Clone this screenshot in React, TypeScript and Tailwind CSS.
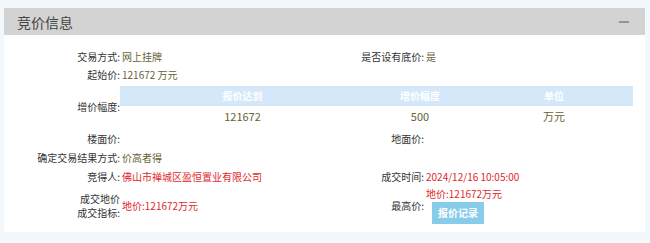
import { Minus } from "lucide-react";

const font = { fontFamily: '"Noto Sans CJK SC", "Noto Sans", sans-serif' };

function Label({ children }: { children: React.ReactNode }) {
  return <div className="text-right text-[#333] whitespace-nowrap">{children}</div>;
}

function Value({ children, red }: { children?: React.ReactNode; red?: boolean }) {
  return (
    <div className={`pl-[2px] whitespace-nowrap ${red ? "text-[#e0282e]" : "text-[#675f36]"}`}>
      {children}
    </div>
  );
}

export default function App() {
  const cols = "grid grid-cols-[116px_188px_116px_1fr] items-center";

  return (
    <div className="w-[650px] h-[243px] bg-[#f3f8fd] pt-[8px] px-[4px] text-[10px] leading-none" style={font}>
      <div className="w-[641px] bg-white">
        <div className="h-[27px] bg-[#d3d3d3] flex items-center justify-between pl-[13px] pr-[13px]">
          <h2 className="text-[14px] text-[#444]">竞价信息</h2>
          <Minus className="w-[16px] h-[16px] text-[#555]" strokeWidth={1.5} />
        </div>

        <div className="pt-[13px] pb-[6px] pr-[12px]">
          <div className={`${cols} h-[18px]`}>
            <Label>交易方式:</Label>
            <Value>网上挂牌</Value>
            <Label>是否设有底价:</Label>
            <Value>是</Value>
          </div>
          <div className={`${cols} h-[17px]`}>
            <Label>起始价:</Label>
            <Value>121672 万元</Value>
          </div>

          <div className="grid grid-cols-[116px_1fr] items-center mt-[3px]">
            <Label>增价幅度:</Label>
            <div className="ml-[0px]">
              <div className="grid grid-cols-[245px_110px_1fr] h-[20px] items-center bg-[#d4e8f9] text-white font-bold text-center">
                <div>报价达到</div>
                <div>增价幅度</div>
                <div>单位</div>
              </div>
              <div className="grid grid-cols-[245px_110px_1fr] h-[21px] items-center text-center text-[#675f36] text-[11px]">
                <div>121672</div>
                <div>500</div>
                <div>万元</div>
              </div>
            </div>
          </div>

          <div className={`${cols} h-[19px] mt-[2px]`}>
            <Label>楼面价:</Label>
            <Value />
            <Label>地面价:</Label>
            <Value />
          </div>
          <div className={`${cols} h-[19px]`}>
            <Label>确定交易结果方式:</Label>
            <Value>价高者得</Value>
          </div>
          <div className={`${cols} h-[19px]`}>
            <Label>竞得人:</Label>
            <Value red>佛山市禅城区盈恒置业有限公司</Value>
            <Label>成交时间:</Label>
            <Value red>2024/12/16 10:05:00</Value>
          </div>
          <div className={`${cols} h-[40px]`}>
            <div className="text-right text-[#333] leading-[14px]">
              成交地价
              <br />
              成交指标:
            </div>
            <Value red>地价:121672万元</Value>
            <Label>最高价:</Label>
            <div className="pl-[2px] flex flex-col items-start">
              <span className="text-[#e0282e] leading-[12px]">地价:121672万元</span>
              <button className="ml-[6px] mt-[2px] w-[52px] h-[22px] bg-[#87cde9] text-white font-bold text-[10px]">
                报价记录
              </button>
            </div>
          </div>
        </div>
      </div>
    </div>
  );
}
